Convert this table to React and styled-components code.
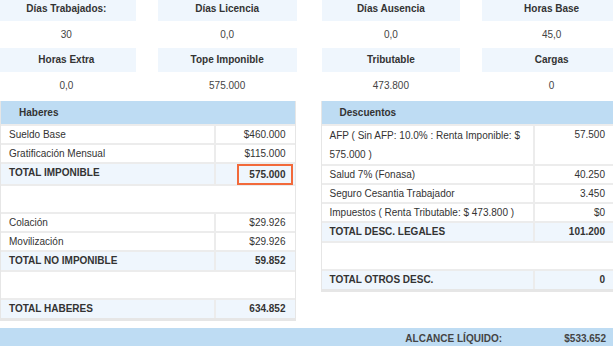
import styled, { createGlobalStyle } from "styled-components";

const Global = createGlobalStyle`
  html, body {
    margin:0;
    padding:0;
    background:#fff;
    overflow:hidden;
  }
  body {
    font-family:"Liberation Sans", Arial, sans-serif;
    font-size:10px;
    color:#333;
  }
`

const Pagina = styled.div`
  width:624px;
  margin:-3px 0 0 -3px;
`

const Mitades = styled.div`
  display:grid;
  grid-template-columns:1fr 1fr;
  column-gap:25px;
  align-items:start;
`

const Mitad = styled.div`
  display:flex;
  flex-direction:column;
`

const Resumen = styled.div`
  display:grid;
  grid-template-columns:1fr 1fr;
  column-gap:22px;
`

const Dato = styled.div`
  display:flex;
  flex-direction:column;
  text-align:center;
`

const DatoTitulo = styled.div`
  height:24px;
  line-height:24px;
  background:#eff6fd;
  font-weight:bold;
  color:#333;
`

const DatoValor = styled.div`
  height:27px;
  line-height:27px;
  color:#444;
`

const Panel = styled.div`
  margin:2px ${p => (p.$izq ? "1px 0 3px" : "6px 0 -1px")};
  border:1px solid #e6e6e6;
  border-bottom:3px solid #e6e6e6;
  border-top:none;
`

const PanelTitulo = styled.div`
  height:23px;
  line-height:23px;
  padding-left:18px;
  background:#bedcf3;
  font-weight:bold;
  color:#333;
`

const Fila = styled.div`
  display:grid;
  grid-template-columns:1fr 81px;
  border-top:2px solid #ececec;
  background:${p => (p.$total ? "#eff6fd" : "#fff")};
  font-weight:${p => (p.$total ? "bold" : "normal")};
  min-height:${p => (p.$vacia ? "26px" : "17px")};
`

const Etiqueta = styled.div`
  padding:0 8px;
  line-height:${p => (p.$alto ? "19px" : "17px")};
  ${p => p.$total && "line-height:18px;"}
`

const Valor = styled.div`
  border-left:2px solid #ececec;
  text-align:right;
  padding:0 9px 0 4px;
  line-height:${p => (p.$total ? "18px" : "17px")};
`

const Marcado = styled.span`
  display:inline-block;
  margin:0 -7px -1px 0;
  padding:0 5px 0 10px;
  border:2px solid #f26a3b;
  line-height:17px;
`

const Liquido = styled.div`
  display:grid;
  grid-template-columns:1fr 88px;
  margin-top:7px;
  margin-left:3px;
  height:24px;
  line-height:22px;
  background:#bedcf3;
  font-weight:bold;
  color:#444;
`

const LiquidoEtiqueta = styled.div`
  text-align:right;
  padding-right:31px;
`

const LiquidoValor = styled.div`
  text-align:right;
  padding-right:15px;
`

const resumen = [
  [["Días Trabajados:", "30"], ["Días Licencia", "0,0"]],
  [["Horas Extra", "0,0"], ["Tope Imponible", "575.000"]],
]

const resumenDer = [
  [["Días Ausencia", "0,0"], ["Horas Base", "45,0"]],
  [["Tributable", "473.800"], ["Cargas", "0"]],
]

const Datos = ({ filas }) => (
  <Resumen>
    {filas.flat().map(([t, v]) => (
      <Dato key={t}>
        <DatoTitulo>{t}</DatoTitulo>
        <DatoValor>{v}</DatoValor>
      </Dato>
    ))}
  </Resumen>
)

const Vacia = () => (
  <Fila $vacia>
    <Etiqueta />
  </Fila>
)

const App = () => {
  return <>
    <Global />
    <Pagina>
      <Mitades>
        <Mitad>
          <Datos filas={resumen} />
          <Panel $izq>
            <PanelTitulo>Haberes</PanelTitulo>
            <Fila>
              <Etiqueta>Sueldo Base</Etiqueta>
              <Valor>$460.000</Valor>
            </Fila>
            <Fila>
              <Etiqueta>Gratificación Mensual</Etiqueta>
              <Valor>$115.000</Valor>
            </Fila>
            <Fila $total>
              <Etiqueta $total>TOTAL IMPONIBLE</Etiqueta>
              <Valor $total><Marcado>575.000</Marcado></Valor>
            </Fila>
            <Vacia />
            <Fila>
              <Etiqueta>Colación</Etiqueta>
              <Valor>$29.926</Valor>
            </Fila>
            <Fila>
              <Etiqueta>Movilización</Etiqueta>
              <Valor>$29.926</Valor>
            </Fila>
            <Fila $total>
              <Etiqueta $total>TOTAL NO IMPONIBLE</Etiqueta>
              <Valor $total>59.852</Valor>
            </Fila>
            <Vacia />
            <Fila $total>
              <Etiqueta $total>TOTAL HABERES</Etiqueta>
              <Valor $total>634.852</Valor>
            </Fila>
          </Panel>
        </Mitad>
        <Mitad>
          <Datos filas={resumenDer} />
          <Panel>
            <PanelTitulo>Descuentos</PanelTitulo>
            <Fila>
              <Etiqueta $alto>AFP ( Sin AFP: 10.0% : Renta Imponible: $ 575.000 )</Etiqueta>
              <Valor>57.500</Valor>
            </Fila>
            <Fila>
              <Etiqueta>Salud 7% (Fonasa)</Etiqueta>
              <Valor>40.250</Valor>
            </Fila>
            <Fila>
              <Etiqueta>Seguro Cesantia Trabajador</Etiqueta>
              <Valor>3.450</Valor>
            </Fila>
            <Fila>
              <Etiqueta>Impuestos ( Renta Tributable: $ 473.800 )</Etiqueta>
              <Valor>$0</Valor>
            </Fila>
            <Fila $total>
              <Etiqueta $total>TOTAL DESC. LEGALES</Etiqueta>
              <Valor $total>101.200</Valor>
            </Fila>
            <Vacia />
            <Fila $total>
              <Etiqueta $total>TOTAL OTROS DESC.</Etiqueta>
              <Valor $total>0</Valor>
            </Fila>
          </Panel>
        </Mitad>
      </Mitades>
      <Liquido>
        <LiquidoEtiqueta>ALCANCE LÍQUIDO:</LiquidoEtiqueta>
        <LiquidoValor>$533.652</LiquidoValor>
      </Liquido>
    </Pagina>
  </>
}

export default App
